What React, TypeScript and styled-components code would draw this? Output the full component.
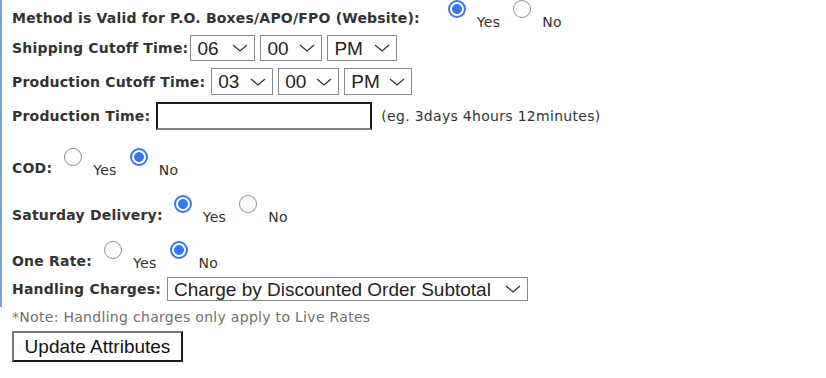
import React from 'react'
import styled, { createGlobalStyle } from 'styled-components'

const GlobalStyle = createGlobalStyle`
  body {
    margin: 0;
    background: #fff;
    font-family: "DejaVu Sans", Verdana, sans-serif;
    font-size: 14px;
    letter-spacing: 0.3px;
    color: #333;
  }
`

const Page = styled.div`
  width: 826px;
  height: 378px;
  overflow: hidden;
`

const Section = styled.section`
  border-left: 2px solid #7aa2d6;
  padding: 0 0 4px 10px;
  display: flex;
  flex-direction: column;
`

const Row = styled.div<{ $h: number; $mt: number; $end?: boolean }>`
  display: flex;
  align-items: ${props => (props.$end ? 'flex-end' : 'center')};
  height: ${props => props.$h}px;
  margin-top: ${props => props.$mt}px;
`

const Label = styled.span<{ $gap?: number; $lift?: number }>`
  font-weight: bold;
  letter-spacing: 0.2px;
  line-height: 16px;
  white-space: nowrap;
  margin-right: ${props => props.$gap ?? 6}px;
  margin-bottom: ${props => props.$lift ?? 0}px;
`

const Radio = styled.input.attrs({ type: 'radio' })`
  appearance: none;
  box-sizing: border-box;
  width: 18px;
  height: 18px;
  margin: 0 11px 10px 0;
  border-radius: 50%;
  border: 1px solid #8e8e8e;
  background: #fff;
  flex: none;

  &:checked {
    border: 2px solid #3478f6;
    background: radial-gradient(circle, #3478f6 0 4.6px, #fff 5.2px);
  }
`

const OptionText = styled.span`
  line-height: 16px;
  margin: 0 13px -2px 0;
`

const SelectWrap = styled.span`
  position: relative;
  display: inline-flex;
  margin-right: 5px;
`

const Select = styled.select<{ $w: number; $h: number }>`
  appearance: none;
  box-sizing: border-box;
  width: ${props => props.$w}px;
  height: ${props => props.$h}px;
  padding: 0 0 0 6px;
  border: 1px solid #8a8a8a;
  border-radius: 0;
  background: #fff;
  color: #222;
  font-family: "Liberation Sans", Arial, sans-serif;
  font-size: 19px;
  letter-spacing: 0;
  outline: none;
`

const Chevron = styled.svg`
  position: absolute;
  right: 7px;
  top: 50%;
  margin-top: -4px;
  pointer-events: none;
`

const TextInput = styled.input`
  box-sizing: border-box;
  width: 216px;
  height: 28px;
  margin: 0 9px 0 0;
  padding: 0 4px;
  border: 2px solid #1f1f1f;
  border-bottom-color: #858585;
  font-size: 14px;
  outline: none;
`

const Hint = styled.span`
  line-height: 16px;
  color: #333;
`

const Note = styled.div`
  margin: 2px 0 0 12px;
  line-height: 16px;
  color: #707070;
`

const Button = styled.button`
  display: block;
  margin: 6px 0 0 12px;
  box-sizing: border-box;
  width: 171px;
  height: 31px;
  padding: 0;
  background: #fff;
  border: 2px solid;
  border-color: #777 #1c1c1c #1c1c1c #777;
  color: #111;
  font-family: "Liberation Sans", Arial, sans-serif;
  font-size: 19px;
`

interface IDropdown {
  value: string
  options: string[]
  width: number
  height: number
}

const Dropdown = ({ value, options, width, height }: IDropdown) => (
  <SelectWrap>
    <Select $w={width} $h={height} defaultValue={value}>
      {options.map(o => (
        <option key={o}>{o}</option>
      ))}
    </Select>
    <Chevron width="16" height="8" viewBox="0 0 16 8">
      <polyline points="1,1 8,7 15,1" fill="none" stroke="#333" strokeWidth="1.3" />
    </Chevron>
  </SelectWrap>
)

interface IYesNo {
  name: string
  yes: boolean
}

const YesNo = ({ name, yes }: IYesNo) => (
  <>
    <Radio name={name} defaultChecked={yes} />
    <OptionText>Yes</OptionText>
    <Radio name={name} defaultChecked={!yes} />
    <OptionText>No</OptionText>
  </>
)

const hours = ['01', '02', '03', '04', '05', '06', '07', '08', '09', '10', '11', '12']
const minutes = ['00', '15', '30', '45']
const ampm = ['AM', 'PM']

const App = () => {
  return (
    <Page>
      <GlobalStyle />
      <Section>
        <Row $h={28} $mt={0} $end>
          <Label $gap={28} $lift={2}>Method is Valid for P.O. Boxes/APO/FPO (Website):</Label>
          <YesNo name="po" yes={true} />
        </Row>
        <Row $h={30} $mt={5}>
          <Label $gap={2}>Shipping Cutoff Time:</Label>
          <Dropdown value="06" options={hours} width={65} height={26} />
          <Dropdown value="00" options={minutes} width={62} height={26} />
          <Dropdown value="PM" options={ampm} width={70} height={26} />
        </Row>
        <Row $h={31} $mt={3}>
          <Label>Production Cutoff Time:</Label>
          <Dropdown value="03" options={hours} width={62} height={27} />
          <Dropdown value="00" options={minutes} width={61} height={27} />
          <Dropdown value="PM" options={ampm} width={68} height={27} />
        </Row>
        <Row $h={32} $mt={3}>
          <Label>Production Time:</Label>
          <TextInput type="text" />
          <Hint>(eg. 3days 4hours 12minutes)</Hint>
        </Row>
        <Row $h={28} $mt={16} $end>
          <Label $gap={12}>COD:</Label>
          <YesNo name="cod" yes={false} />
        </Row>
        <Row $h={28} $mt={19} $end>
          <Label $gap={11}>Saturday Delivery:</Label>
          <YesNo name="sat" yes={true} />
        </Row>
        <Row $h={28} $mt={18} $end>
          <Label $gap={12}>One Rate:</Label>
          <YesNo name="onerate" yes={false} />
        </Row>
        <Row $h={28} $mt={6}>
          <Label>Handling Charges:</Label>
          <Dropdown
            value="Charge by Discounted Order Subtotal"
            options={['Charge by Order Subtotal', 'Charge by Discounted Order Subtotal', 'Flat Fee']}
            width={361}
            height={24}
          />
        </Row>
      </Section>
      <Note>*Note: Handling charges only apply to Live Rates</Note>
      <Button>Update Attributes</Button>
    </Page>
  )
}

export default App
